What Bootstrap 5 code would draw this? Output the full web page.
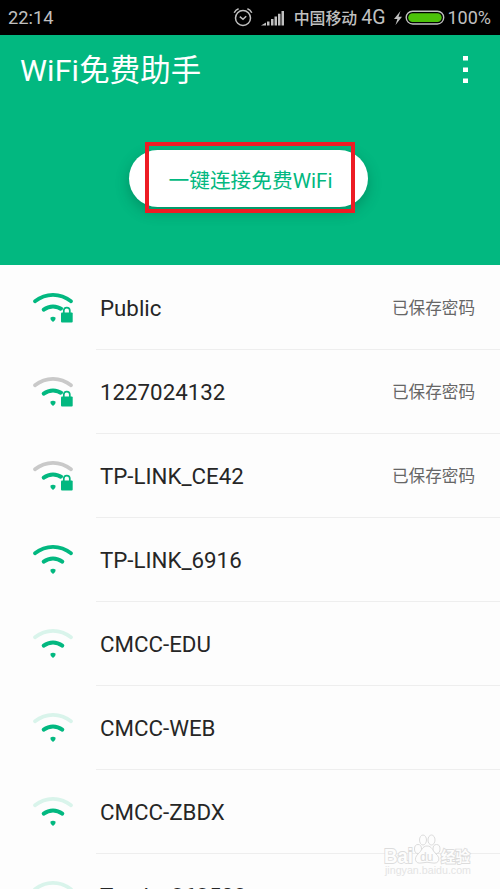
<!DOCTYPE html>
<html lang="zh-CN">
<head>
<meta charset="utf-8">
<meta name="viewport" content="width=device-width, initial-scale=1">
<title>WiFi免费助手</title>
<link href="https://cdn.jsdelivr.net/npm/bootstrap@5.3.0/dist/css/bootstrap.min.css" rel="stylesheet">
<style>
:root{--g:#02b880}
body{font-family:Roboto,"Noto Sans CJK SC",sans-serif;height:889px;overflow:hidden;color:#262626;background:#fdfdfd}
.statusbar{height:35px;background:#000;color:#c0c0c0;font-size:18px;line-height:35px;padding:0 9px 0 8px}
.clock{font-size:18.3px}
.carrier{font-size:15.9px;font-weight:500;margin-left:9px;padding-top:1px}
.net{font-size:19.5px;margin-left:4px}
.hero{height:230px;background:var(--g);color:#fff}
.hero-title{height:70px;padding:0 32px 0 20px}
.app-name{font-size:30.4px;font-weight:400;line-height:70px;letter-spacing:.15px;padding-top:1px}
.connect{width:239px;height:57px;margin:45px 0 0 129px;background:#fff;color:var(--g);font-size:20.7px;line-height:62px;box-shadow:0 5px 14px rgba(0,60,40,.3);position:relative;padding:0 0 0 4px;border:0;display:block}
.focusbox{position:absolute;left:16px;top:-8px;width:210px;height:71px;border:4px solid #ed1c24}
.net-list{height:624px}
.net-row{height:84px;padding-left:33px}
.wifi{margin-top:26px;--arc:var(--g)}
.net-body{height:85px;margin-left:22px;padding:4px 25px 0 4px;border-bottom:1px solid #eee}
.ssid{font-size:22.3px}
.saved{font-size:16.6px;color:#666;padding-top:1px}
.wifi.gray{--arc:#c9c9c9}
.wifi.pale{--arc:#d9f4eb}
.stamp{left:382px;top:832px}
</style>
<script src="https://cdn.jsdelivr.net/npm/bootstrap@5.3.0/dist/js/bootstrap.bundle.min.js"></script>
</head>
<body>
<svg width="0" height="0" class="position-absolute">
<symbol id="waves" viewBox="0 0 41 34"><g fill="none" stroke-width="3.7" stroke-linecap="round"><path d="M2 10.3Q10 3.8 20 3.8T38 10.3" stroke="var(--arc)"/><path d="M10.7 18.6Q15 15.4 20 15.4T29.3 18.6" stroke="#02b880" stroke-width="4"/></g><path d="M17.3 26.8Q20 24.9 22.7 26.8Q23 29 20 31Q17 29 17.3 26.8Z" fill="#02b880"/></symbol>
<symbol id="lock" viewBox="0 0 41 34"><path d="M27 22V34H41V14H34Q30.5 14.5 29.5 19L27 20Z" fill="#fdfdfd"/><rect x="28" y="21.6" width="11.7" height="10" rx="1" fill="#02b880"/><path d="M30.8 22V19.6a3 3 0 0 1 6 0V22" fill="none" stroke="#02b880" stroke-width="1.7"/></symbol>
</svg>
<header class="statusbar d-flex align-items-center">
<span class="clock me-auto">22:14</span>
<svg width="20" height="20" viewBox="0 0 20 20" fill="none" stroke="#c0c0c0" stroke-width="1.5"><circle cx="10" cy="10" r="7.5"/><path d="M6.8 8.7 10 11.3 13.2 8.3M1.2 4.7Q2.6 1.7 5.6 .7M18.8 4.7Q17.4 1.7 14.4 .7"/></svg>
<svg class="ms-2" width="24" height="16" viewBox="0 0 24 16" fill="#c0c0c0"><path d="M0 15.5 5 12.5V15.5ZM6 11.5h2.5v4H6ZM10 9h2.5v6.5H10ZM13.5 6.5h2.5v9h-2.5ZM17 3.8h2.5v11.7H17ZM20.5 1H23v14.5h-2.5Z"/></svg>
<span class="carrier">中国移动</span><span class="net">4G</span>
<svg class="ms-2" width="54" height="20" viewBox="0 0 54 20"><path d="M7.5 3 1 11H4.4L2.5 17 9 8.8H5.5Z" fill="#c0c0c0"/><rect x="13.2" y="3.2" width="37.5" height="12.8" rx="6.4" fill="none" stroke="#c0c0c0" stroke-width="1.4"/><rect x="15.2" y="5.2" width="33.5" height="8.8" rx="4.4" fill="#4cc209"/></svg>
<span>100%</span>
</header>
<section class="hero">
<div class="hero-title d-flex align-items-center justify-content-between"><h1 class="app-name m-0">WiFi免费助手</h1>
<svg width="5" height="28" fill="#fff"><path d="M0 0h5v4.5H0ZM0 11.5h5V16H0ZM0 22.5h5V27H0Z"/></svg></div>
<button class="connect rounded-pill text-center">一键连接免费WiFi<span class="focusbox"></span></button>
</section>
<main class="net-list overflow-hidden">
<div class="net-row d-flex"><svg class="wifi" width="41" height="34"><use href="#waves"/><use href="#lock"/></svg><div class="net-body flex-grow-1 d-flex align-items-center justify-content-between"><span class="ssid">Public</span><span class="saved">已保存密码</span></div></div>
<div class="net-row d-flex"><svg class="wifi gray" width="41" height="34"><use href="#waves"/><use href="#lock"/></svg><div class="net-body flex-grow-1 d-flex align-items-center justify-content-between"><span class="ssid">1227024132</span><span class="saved">已保存密码</span></div></div>
<div class="net-row d-flex"><svg class="wifi gray" width="41" height="34"><use href="#waves"/><use href="#lock"/></svg><div class="net-body flex-grow-1 d-flex align-items-center justify-content-between"><span class="ssid">TP-LINK_CE42</span><span class="saved">已保存密码</span></div></div>
<div class="net-row d-flex"><svg class="wifi" width="41" height="34"><use href="#waves"/></svg><div class="net-body flex-grow-1 d-flex align-items-center"><span class="ssid">TP-LINK_6916</span></div></div>
<div class="net-row d-flex"><svg class="wifi pale" width="41" height="34"><use href="#waves"/></svg><div class="net-body flex-grow-1 d-flex align-items-center"><span class="ssid">CMCC-EDU</span></div></div>
<div class="net-row d-flex"><svg class="wifi pale" width="41" height="34"><use href="#waves"/></svg><div class="net-body flex-grow-1 d-flex align-items-center"><span class="ssid">CMCC-WEB</span></div></div>
<div class="net-row d-flex"><svg class="wifi pale" width="41" height="34"><use href="#waves"/></svg><div class="net-body flex-grow-1 d-flex align-items-center"><span class="ssid">CMCC-ZBDX</span></div></div>
<div class="net-row d-flex"><svg class="wifi pale" width="41" height="34"><use href="#waves"/></svg><div class="net-body flex-grow-1 d-flex align-items-center"><span class="ssid">Tenda_363502</span></div></div>
</main>
<svg class="stamp position-absolute" width="92" height="48" viewBox="0 0 92 48" fill="#fdfdfd" stroke="#dcdcdc" stroke-width="1" font-family="Liberation Sans, Noto Sans CJK SC, sans-serif">
<g font-weight="bold" paint-order="stroke"><text x="2" y="31" font-size="21" textLength="29" lengthAdjust="spacingAndGlyphs" stroke-width="1.8">Bai</text><text x="59" y="30" font-size="14.5" stroke-width="1.8">经验</text></g>
<ellipse cx="36" cy="17" rx="3.5" ry="4.5"/><ellipse cx="41" cy="8" rx="3.5" ry="5"/><ellipse cx="49.5" cy="8" rx="3.5" ry="5"/><ellipse cx="54.5" cy="17" rx="3.5" ry="4.5"/><path d="M45 14C40 14 40 19 36 22C31 27 34 32 39 31Q45 29.5 51 31C57 32 59 26 54 22C50 18 50 14 45 14Z"/><text x="38" y="29" font-size="12" fill="#dcdcdc" stroke="none">du</text>
<text x="3" y="42" font-size="10.5" fill="#e4e4e4" stroke="none" textLength="86" lengthAdjust="spacingAndGlyphs">jingyan.baidu.com</text></svg>
</body>
</html>
